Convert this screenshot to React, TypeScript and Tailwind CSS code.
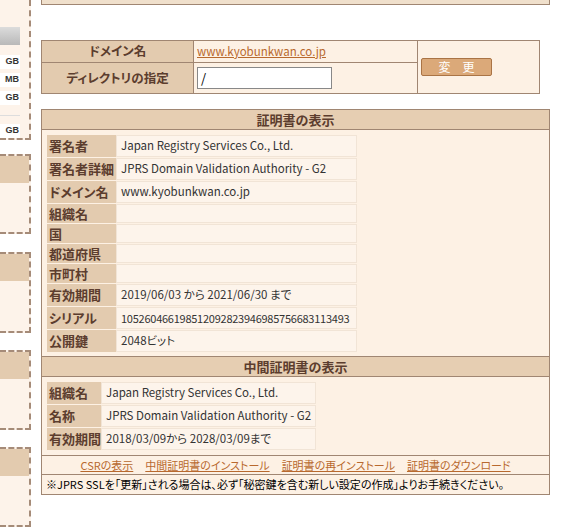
const font = '[font-family:"Noto_Sans_CJK_JP","Liberation_Sans",sans-serif] [font-feature-settings:"palt"]';

const certRows = [
  { label: '署名者', value: 'Japan Registry Services Co., Ltd.' },
  { label: '署名者詳細', value: 'JPRS Domain Validation Authority - G2' },
  { label: 'ドメイン名', value: 'www.kyobunkwan.co.jp' },
  { label: '組織名', value: '' },
  { label: '国', value: '' },
  { label: '都道府県', value: '' },
  { label: '市町村', value: '' },
  { label: '有効期間', value: '2019/06/03 から 2021/06/30 まで' },
  { label: 'シリアル', value: '105260466198512092823946985756683113493', tight: true },
  { label: '公開鍵', value: '2048ビット' },
];

const midRows = [
  { label: '組織名', value: 'Japan Registry Services Co., Ltd.' },
  { label: '名称', value: 'JPRS Domain Validation Authority - G2' },
  { label: '有効期間', value: '2018/03/09から 2028/03/09まで' },
];

const links = ['CSRの表示', '中間証明書のインストール', '証明書の再インストール', '証明書のダウンロード'];

function SideBox({ className = '' }: { className?: string }) {
  return (
    <div className={`w-[31px] h-[90px] border-y-2 border-r-2 border-dashed border-[#a58b78] bg-[#fdf3ea] ${className}`}>
      <div className="h-[27px] bg-[#e3cbaf]" />
    </div>
  );
}

function CertRow({
  label,
  value,
  labelW,
  valueW,
  tight,
}: {
  label: string;
  value: string;
  labelW: string;
  valueW: string;
  tight?: boolean;
}) {
  const h = value ? 'h-[22px]' : 'h-[19px]';
  const size = tight ? 'text-[11px] tracking-[-0.25px]' : 'text-[11.5px]';
  return (
    <div className="flex mb-[1px]">
      <div className={`${labelW} ${h} bg-[#e3cbaf] pl-[2px] flex items-center text-[13px] font-bold text-[#5c3d2e] whitespace-nowrap`}>
        {label}
      </div>
      <div className={`${valueW} ${h} border border-[#f1e4d6] bg-[#fdf4eb] pl-[4px] flex items-center ${size} text-[#333] whitespace-nowrap overflow-hidden`}>
        {value}
      </div>
    </div>
  );
}

export default function App() {
  return (
    <div className={`${font} w-[577px] h-[527px] overflow-hidden bg-white flex`}>
      {/* サイドバー */}
      <div className="w-[31px] flex flex-col">
        <div className="h-[143px] border-b-2 border-r-2 border-dashed border-[#a58b78] bg-[#fdf3ea] pt-[27px]">
          <div className="w-[20px] h-[18px] bg-gradient-to-b from-[#dcdcdc] to-[#b9b9b9]" />
          <div className="mt-[10px] flex flex-col gap-[4px] text-[9px] font-bold text-[#333] [font-family:'Liberation_Sans',sans-serif]">
            <div className="w-[20px] h-[14px] bg-white flex items-center justify-end pr-[1px]">GB</div>
            <div className="w-[20px] h-[14px] bg-white flex items-center justify-end pr-[1px]">MB</div>
            <div className="w-[20px] h-[14px] bg-white flex items-center justify-end pr-[1px]">GB</div>
            <div className="w-[20px] h-[1px] bg-[#ddd] mt-[6px]" />
            <div className="w-[20px] h-[14px] bg-white flex items-center justify-end pr-[1px] mt-[4px]">GB</div>
          </div>
        </div>
        <SideBox className="mt-[14px]" />
        <SideBox className="mt-[18px]" />
        <SideBox className="mt-[17px]" />
        <SideBox className="mt-[17px]" />
      </div>

      {/* メイン */}
      <div className="ml-[10px] w-[509px]">
        <div className="h-[5px] border-x border-b border-[#a08672] bg-[#f0e0cc]" />

        {/* ドメイン */}
        <div className="mt-[35px] w-[499px] h-[54px] border border-[#a08672] flex">
          <div className="w-[151px] flex flex-col">
            <div className="h-[22px] bg-[#e3cbaf] border-b border-[#a08672] flex items-center justify-center text-[12.5px] font-bold text-[#5c3d2e]">
              ドメイン名
            </div>
            <div className="flex-1 bg-[#e3cbaf] flex items-center justify-center text-[12.5px] font-bold text-[#5c3d2e]">
              ディレクトリの指定
            </div>
          </div>
          <div className="w-[224px] flex flex-col border-l border-[#a08672] bg-[#fdf1e4]">
            <div className="h-[22px] border-b border-[#a08672] flex items-center pl-[3px]">
              <a className="text-[11.5px] text-[#b8692e] underline">www.kyobunkwan.co.jp</a>
            </div>
            <div className="flex-1 flex items-center pl-[3px]">
              <div className="w-[135px] h-[22px] bg-white border border-[#888] flex items-center pl-[3px] text-[13px] text-black">/</div>
            </div>
          </div>
          <div className="flex-1 border-l border-[#a08672] bg-[#fdf1e4] flex items-center pl-[3px]">
            <div className="w-[71px] h-[18px] bg-[#dba979] border border-[#aa7445] rounded-[2px] flex items-center justify-center text-[12px] text-white tracking-[12px] pl-[12px]">
              変更
            </div>
          </div>
        </div>

        {/* 証明書 */}
        <div className="mt-[15px] border border-[#a08672] bg-[#fdf1e4]">
          <div className="h-[20px] bg-[#e6ceb2] border-b border-[#a08672] flex items-center justify-center text-[13px] font-bold text-[#5c3d2e]">
            証明書の表示
          </div>
          <div className="pt-[5px] pb-[3px] pl-[5px]">
            {certRows.map((r) => (
              <CertRow key={r.label} {...r} labelW="w-[69px]" valueW="w-[241px]" />
            ))}
          </div>
          <div className="h-[21px] bg-[#e6ceb2] border-y border-[#a08672] flex items-center justify-center text-[13px] font-bold text-[#5c3d2e]">
            中間証明書の表示
          </div>
          <div className="pt-[5px] pb-[4px] pl-[5px]">
            {midRows.map((r) => (
              <CertRow key={r.label} {...r} labelW="w-[54px]" valueW="w-[215px]" />
            ))}
          </div>
          <div className="h-[19px] border-t border-[#a08672] flex items-center justify-center gap-[12px]">
            {links.map((l) => (
              <a key={l} className="text-[11px] text-[#b8692e] underline whitespace-nowrap">{l}</a>
            ))}
          </div>
          <div className="h-[20px] border-t border-[#a08672] flex items-center pl-[4px] text-[11px] text-black whitespace-nowrap">
            ※JPRS SSLを「更新」される場合は、必ず「秘密鍵を含む新しい設定の作成」よりお手続きください。
          </div>
        </div>
      </div>
    </div>
  );
}
